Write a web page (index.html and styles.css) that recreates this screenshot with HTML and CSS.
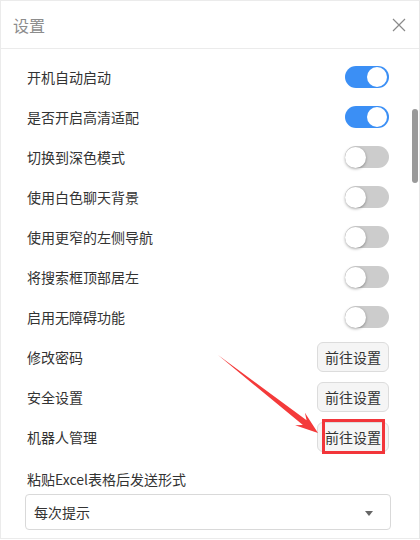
FILE: index.html
```html
<!DOCTYPE html>
<html>
<head>
    <title>设置</title>
    <link rel="stylesheet" href="styles.css">
</head>
<body>
    <div class="settings-panel">
        <div class="panel-header">
            <span class="panel-title">设置</span>
            <svg class="close-icon" width="14" height="14" viewBox="0 0 14 14">
                <path d="M1 1 L13 13 M13 1 L1 13" stroke="#8a8a8a" stroke-width="1.2" fill="none"/>
            </svg>
        </div>
        <div class="panel-body">
            <div class="setting-row">
                <span>开机自动启动</span>
                <span class="switch on"></span>
            </div>
            <div class="setting-row">
                <span>是否开启高清适配</span>
                <span class="switch on"></span>
            </div>
            <div class="setting-row">
                <span>切换到深色模式</span>
                <span class="switch"></span>
            </div>
            <div class="setting-row">
                <span>使用白色聊天背景</span>
                <span class="switch"></span>
            </div>
            <div class="setting-row">
                <span>使用更窄的左侧导航</span>
                <span class="switch"></span>
            </div>
            <div class="setting-row">
                <span>将搜索框顶部居左</span>
                <span class="switch"></span>
            </div>
            <div class="setting-row">
                <span>启用无障碍功能</span>
                <span class="switch"></span>
            </div>
            <div class="setting-row">
                <span>修改密码</span>
                <button class="go-btn">前往设置</button>
            </div>
            <div class="setting-row">
                <span>安全设置</span>
                <button class="go-btn">前往设置</button>
            </div>
            <div class="setting-row">
                <span>机器人管理</span>
                <button class="go-btn marked">前往设置</button>
            </div>
            <div class="field-label">粘贴Excel表格后发送形式</div>
            <div class="select-box">
                <span>每次提示</span>
                <svg class="select-arrow" width="8" height="5" viewBox="0 0 8 5">
                    <path d="M0 0 L8 0 L4 5 Z" fill="#666"/>
                </svg>
            </div>
        </div>
        <!-- scrollbar thumb -->
        <div class="scroll-thumb"></div>
        <!-- annotation arrow -->
        <svg class="note-arrow" width="420" height="540" viewBox="0 0 420 540">
            <polygon points="218,355 306.6,420.3 304.9,412.7 318,433 295.1,425.3 302.9,425.1" fill="#f43a3a"/>
        </svg>
    </div>
</body>
</html>
```

FILE: styles.css
```css
body {
    margin: 0;
    font-family: "Noto Sans CJK SC", "Noto Sans", sans-serif;
    background-color: #fff;
}

.settings-panel {
    position: relative;
    width: 420px;
    height: 539px;
    box-sizing: border-box;
    border: 1px solid #ebebeb;
    border-right: 1px solid #e6e6e6;
    background-color: #fff;
    overflow: hidden;
}

.panel-header {
    display: flex;
    align-items: center;
    justify-content: space-between;
    height: 47px;
    padding: 0 13px 0 12px;
    border-bottom: 1px solid #ebebeb;
}

.panel-title {
    font-size: 16px;
    color: #8c8c8c;
}

.close-icon {
    display: block;
}

.panel-body {
    padding: 8px 30px 0 26px;
    background-color: #fff;
}

.setting-row {
    display: flex;
    align-items: center;
    justify-content: space-between;
    height: 40px;
    font-size: 14px;
    color: #333;
}

.switch {
    position: relative;
    width: 44px;
    height: 22px;
    border-radius: 11px;
    background-color: #ccc;
}

.switch::after {
    content: "";
    position: absolute;
    top: 1px;
    left: 0;
    width: 21px;
    height: 21px;
    border-radius: 50%;
    background-color: #fff;
    box-shadow: 0 1px 3px rgba(0, 0, 0, 0.35);
}

.switch.on {
    background-color: #3b8ff5;
}

.switch.on::after {
    left: 22px;
    top: 1px;
    width: 20px;
    height: 20px;
    box-shadow: none;
}

.go-btn {
    position: relative;
    width: 72px;
    height: 30px;
    padding: 0;
    font-family: inherit;
    font-size: 14px;
    color: #333;
    background-color: #f5f5f5;
    border: 1px solid #dcdcdc;
    border-radius: 6px;
}

.go-btn.marked::after {
    content: "";
    position: absolute;
    left: 4px;
    top: -4px;
    width: 63px;
    height: 35px;
    box-sizing: border-box;
    border: 3px solid #f2353a;
}

.field-label {
    margin-top: 12px;
    margin-bottom: 5px;
    line-height: 20px;
    font-size: 14px;
    color: #333;
}

.select-box {
    display: flex;
    align-items: center;
    justify-content: space-between;
    width: 366px;
    height: 36px;
    margin-left: -2px;
    padding: 0 17px 0 8px;
    box-sizing: border-box;
    border: 1px solid #d9d9d9;
    border-radius: 4px;
    font-size: 14px;
    color: #333;
}

.select-arrow {
    display: block;
    margin-top: 2px;
}

.scroll-thumb {
    position: absolute;
    right: 1px;
    top: 108px;
    width: 6px;
    height: 74px;
    border-radius: 3px;
    background-color: #9a9a9a;
}

.note-arrow {
    position: absolute;
    left: -1px;
    top: -1px;
    pointer-events: none;
}
```
